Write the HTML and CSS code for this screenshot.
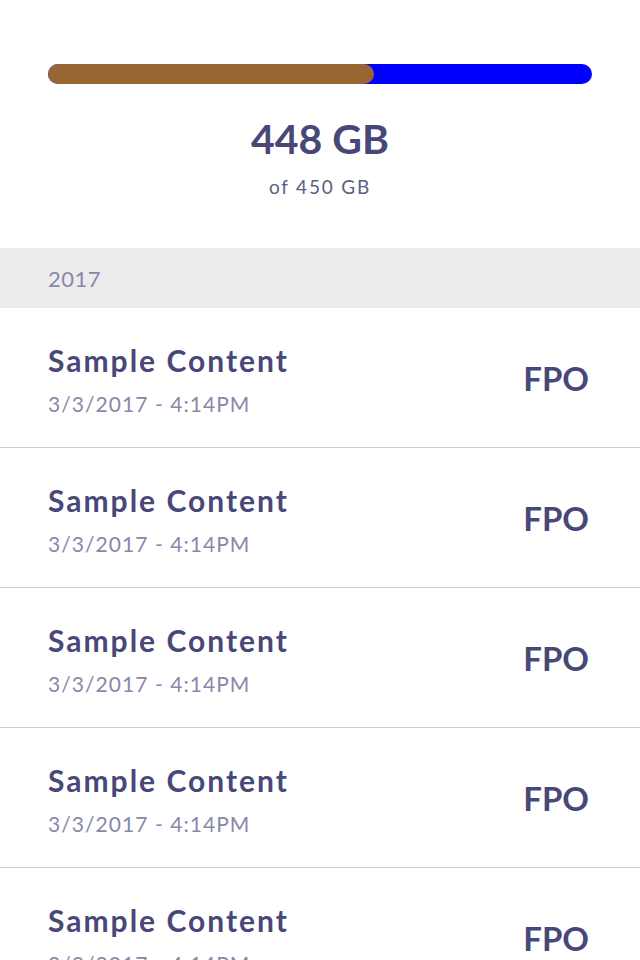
FILE: index.html
```html
<!DOCTYPE html>
<html>
<head>
<meta charset="utf-8">
<link rel="stylesheet" href="styles.css">
</head>
<body>
<div class="usage">
  <div class="bar"><div class="bar-fill" style="width:60%"></div></div>
  <div class="used">448 GB</div>
  <div class="total">of 450 GB</div>
</div>
<div class="section">2017</div>
<ul class="list">
  <li class="row"><div class="info"><div class="title">Sample Content</div><div class="date">3/3/2017 - 4:14PM</div></div><div class="fpo">FPO</div></li>
  <li class="row"><div class="info"><div class="title">Sample Content</div><div class="date">3/3/2017 - 4:14PM</div></div><div class="fpo">FPO</div></li>
  <li class="row"><div class="info"><div class="title">Sample Content</div><div class="date">3/3/2017 - 4:14PM</div></div><div class="fpo">FPO</div></li>
  <li class="row"><div class="info"><div class="title">Sample Content</div><div class="date">3/3/2017 - 4:14PM</div></div><div class="fpo">FPO</div></li>
  <li class="row"><div class="info"><div class="title">Sample Content</div><div class="date">3/3/2017 - 4:14PM</div></div><div class="fpo">FPO</div></li>
</ul>
</body>
</html>
```
FILE: styles.css
```css
html, body {
  margin: 0;
  padding: 0;
  background: #fff;
  font-family: Lato, "Open Sans", sans-serif;
  overflow: hidden;
  height: 960px;
}
.usage {
  padding: 64px 48px 0;
  height: 248px;
  box-sizing: border-box;
  text-align: center;
}
.bar {
  height: 20px;
  border-radius: 10px;
  background: #0000ff;
  overflow: hidden;
}
.bar-fill {
  height: 100%;
  background: #996633;
  border-radius: 10px;
}
.used {
  margin-top: 30px;
  font-size: 41px;
  font-weight: 700;
  line-height: 49px;
  color: #484878;
}
.total {
  margin-top: 12px;
  font-size: 19px;
  line-height: 23px;
  letter-spacing: 1.8px;
  color: #5a6082;
}
.section {
  height: 60px;
  background: #ececec;
  padding: 0 48px;
  display: flex;
  align-items: center;
  font-size: 22px;
  letter-spacing: 0.5px;
  color: #8888aa;
}
.list {
  list-style: none;
  margin: 0;
  padding: 0;
}
.row {
  height: 140px;
  box-sizing: border-box;
  border-bottom: 1px solid #cccccc;
  display: flex;
  justify-content: space-between;
  padding: 0 51px 0 48px;
}
.info {
  padding-top: 34px;
}
.title {
  font-size: 30px;
  font-weight: 700;
  line-height: 36px;
  color: #484878;
  letter-spacing: 2px;
}
.date {
  margin-top: 13px;
  font-size: 21px;
  line-height: 25px;
  color: #8888aa;
  letter-spacing: 1.05px;
}
.fpo {
  align-self: center;
  font-size: 33px;
  line-height: 40px;
  font-weight: 700;
  color: #484878;
}
```
